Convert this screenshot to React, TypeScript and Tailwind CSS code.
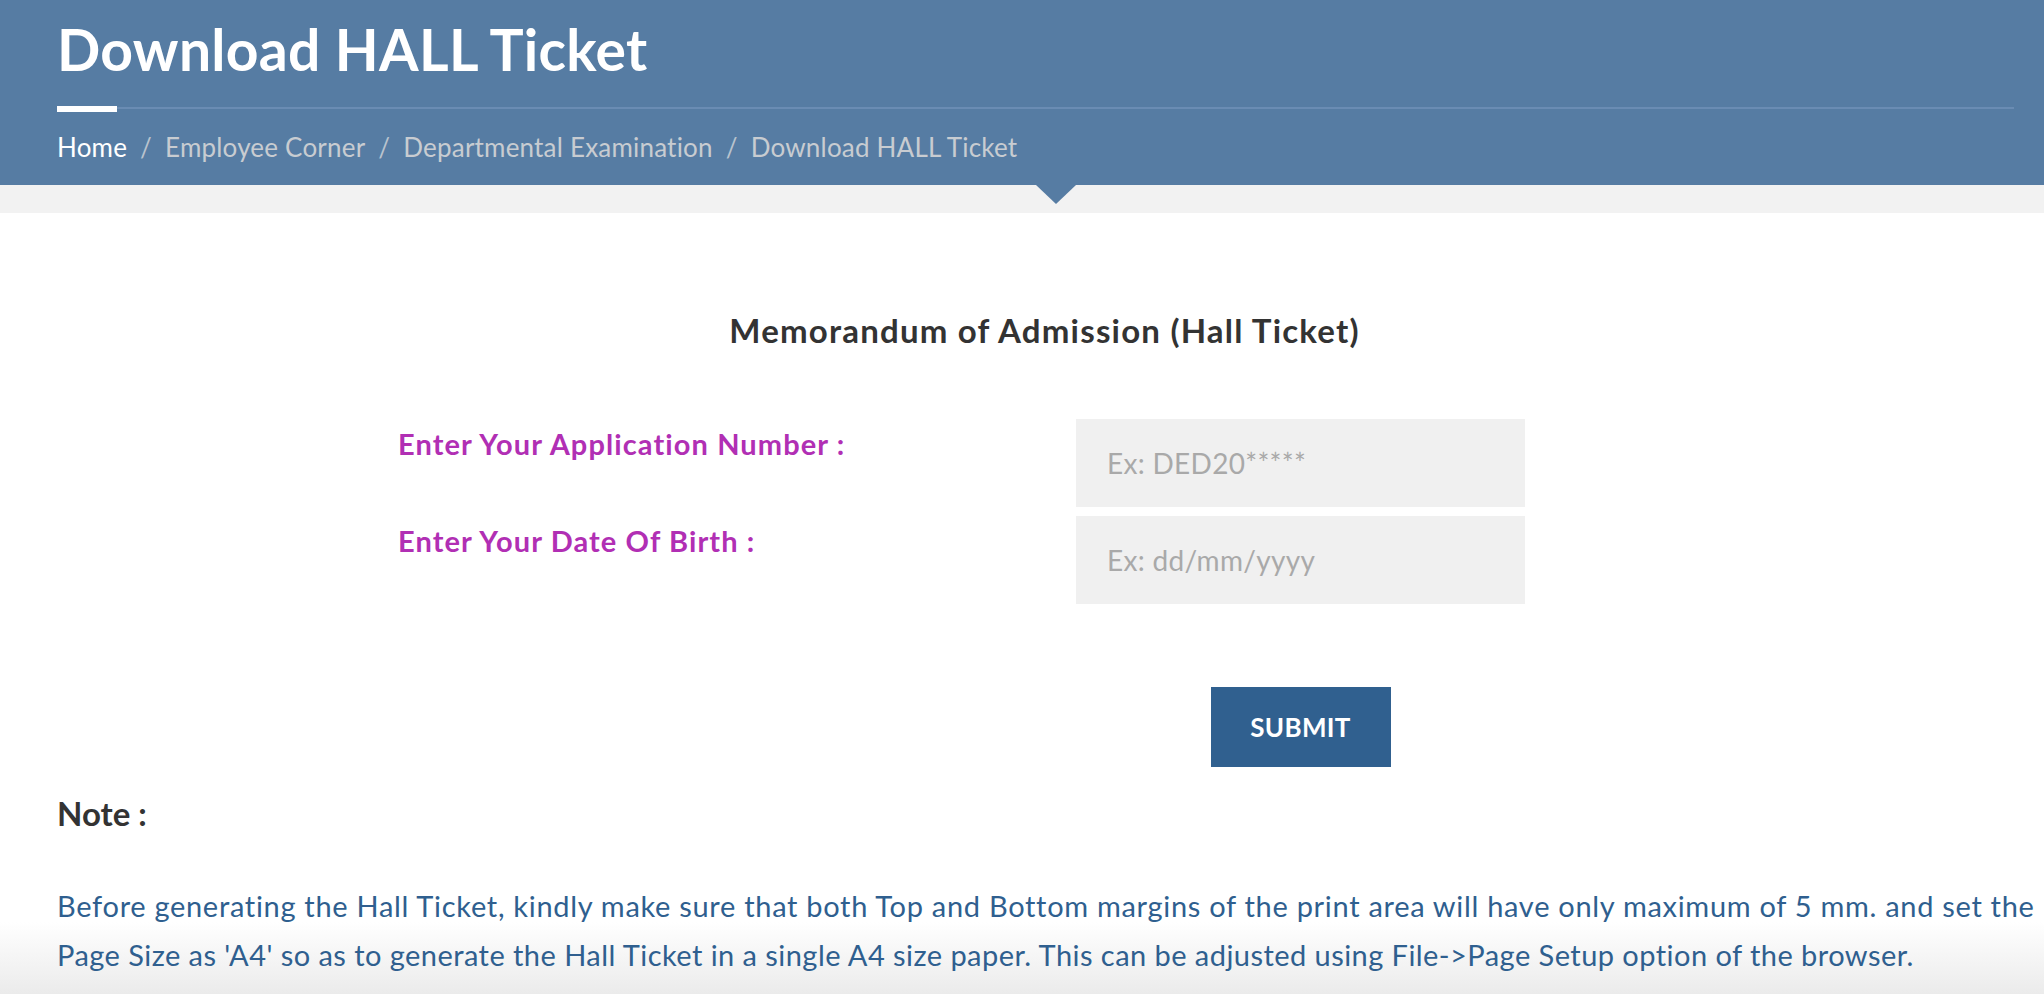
import React from "react";

const crumbs = ["Employee Corner", "Departmental Examination", "Download HALL Ticket"];

function Header() {
  return (
    <header className="bg-[#567ca3] pl-[57px] pr-[30px] pb-[25px]">
      <h1 className="pt-[21px] text-[57px] leading-none font-bold tracking-[0.3px] text-white">
        Download HALL Ticket
      </h1>

      {/* title underline */}
      <div className="relative mt-[28px] h-[6px]">
        <div className="absolute left-0 right-0 top-[1px] h-[2px] bg-[#6a8cb3]" />
        <div className="relative h-[6px] w-[60px] bg-white" />
      </div>

      {/* breadcrumb */}
      <nav className="mt-[22px] flex items-center text-[26px] leading-none tracking-[0.2px]">
        <span className="text-white">Home</span>
        {crumbs.map((c) => (
          <React.Fragment key={c}>
            <span className="mx-[13px] text-[#b9c3ce]">/</span>
            <span className="text-[#c8ccd1]">{c}</span>
          </React.Fragment>
        ))}
      </nav>
    </header>
  );
}

function Field({ label, placeholder }: { label: string; placeholder: string }) {
  return (
    <div className="flex">
      <label className="w-[678px] pt-[10px] text-[29px] leading-none font-bold tracking-[1.1px] text-[#b12fb4]">
        {label}
      </label>
      <input
        type="text"
        placeholder={placeholder}
        className="h-[88px] w-[449px] bg-[#f0f0f0] pl-[31px] text-[28px] tracking-[0.3px] text-[#555] placeholder:text-[#a9a9a9] outline-none"
      />
    </div>
  );
}

export default function App() {
  return (
    <div className="relative h-screen overflow-hidden bg-white font-['Lato','Open_Sans',sans-serif]">
      {/* bottom fade, behind the text */}
      <div className="pointer-events-none absolute bottom-0 left-0 right-0 h-[72px] bg-gradient-to-b from-[#ffffff] to-[#ebebeb]" />

      <div className="relative">
        <Header />

        {/* grey strip with pointer */}
        <div className="relative h-[28px] bg-[#f2f2f2]">
          <svg
            className="absolute left-[1036px] top-0"
            width="40"
            height="20"
            viewBox="0 0 40 20"
          >
            <polygon points="0,0 40,0 20,19" fill="#567ca3" />
          </svg>
        </div>

        <main className="px-[57px]">
          <h2 className="mt-[101px] pl-[45px] text-center text-[33px] leading-none font-bold tracking-[1.2px] text-[#333]">
            Memorandum of Admission (Hall Ticket)
          </h2>

          <form className="mt-[72px] pl-[341px]" onSubmit={(e) => e.preventDefault()}>
            <div className="flex flex-col gap-[9px]">
              <Field label="Enter Your Application Number :" placeholder="Ex: DED20*****" />
              <Field label="Enter Your Date Of Birth :" placeholder="Ex: dd/mm/yyyy" />
            </div>
            <div className="mt-[83px] flex">
              <div className="w-[678px]" />
              <div className="flex w-[449px] justify-center">
                <button
                  type="submit"
                  className="h-[80px] w-[180px] bg-[#30608f] text-[26px] font-bold tracking-[0.3px] text-white"
                >
                  SUBMIT
                </button>
              </div>
            </div>
          </form>

          <h4 className="mt-[30px] text-[33px] leading-none font-bold text-[#333]">Note :</h4>
          <p className="mt-[51px] text-[29px] leading-[49px] text-[#2f5f8f] whitespace-nowrap">
            <span className="block tracking-[0.7px]">
              Before generating the Hall Ticket, kindly make sure that both Top and Bottom margins of the print area will have only maximum of 5 mm. and set the
            </span>
            <span className="block tracking-[0.45px]">
              Page Size as 'A4' so as to generate the Hall Ticket in a single A4 size paper. This can be adjusted using File-&gt;Page Setup option of the browser.
            </span>
          </p>
        </main>
      </div>
    </div>
  );
}
